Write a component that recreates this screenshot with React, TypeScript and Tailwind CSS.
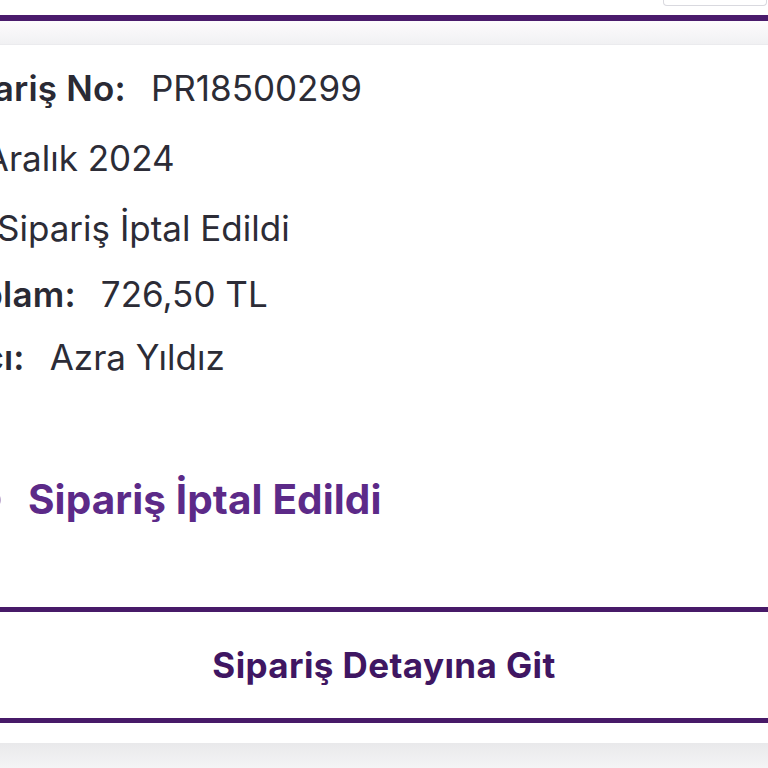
import React from 'react';

const rows = [
  { label: 'Sipariş No:', value: 'PR18500299', h: 'h-[70px]' },
  { label: '', value: '18 Aralık 2024', h: 'h-[70px]' },
  { label: '', value: 'Sipariş İptal Edildi', h: 'h-[70px]', icon: true },
  { label: 'Toplam:', value: '726,50 TL', h: 'h-[62px]' },
  { label: 'Alıcı:', value: 'Azra Yıldız', h: 'h-[64px]' },
];

const XCircle = ({ className }: { className?: string }) => (
  <svg viewBox="0 0 24 24" fill="none" stroke="currentColor" strokeWidth={2} strokeLinecap="round" className={className}>
    <circle cx="12" cy="12" r="10" />
    <path d="M15 9l-6 6M9 9l6 6" />
  </svg>
);

const App = () => {
  return (
    <div className="w-[768px] h-[768px] overflow-hidden bg-white font-['Inter','Noto_Sans',sans-serif] text-[#2c2c36]">
      {/* end of the previous card */}
      <div className="h-[15px] bg-white flex justify-end">
        <div className="w-[104px] h-[6px] mr-[1px] border-x border-b border-[#d9d9df] rounded-b-[4px]" />
      </div>
      <div className="h-[6px] bg-[#4a1b6c]" />
      <div className="h-[24px] bg-gradient-to-b from-[#fdfbfd] to-[#f1f1f3] border-b border-[#ebebee]" />

      {/* order card */}
      <div className="bg-white h-[698px] overflow-hidden">
        <div className="ml-[-61px] pt-[8px]">
          {rows.map((r, i) => (
            <div key={i} className={`${r.h} flex items-center gap-[25px] text-[35px] whitespace-nowrap`}>
              {r.label && <span className="font-semibold text-[#2a2a34] tracking-[0.2px]">{r.label}</span>}
              {r.icon && <XCircle className="w-[35px] h-[35px] text-[#6b6b78]" />}
              <span className={r.icon ? 'font-normal -ml-[2px]' : 'font-normal'}>{r.value}</span>
            </div>
          ))}
        </div>

        <div className="mt-[81px] h-[60px] flex items-center gap-[26px] ml-[-36px] whitespace-nowrap">
          <XCircle className="w-[38px] h-[38px] text-[#5c2a88]" />
          <span className="text-[40.5px] font-bold text-[#5c2a88] tracking-[0.1px]">Sipariş İptal Edildi</span>
        </div>

        <button className="mt-[77px] w-full h-[116px] border-y-[5px] border-[#471a68] bg-white flex items-center justify-center">
          <span className="text-[35px] font-bold text-[#3f1662] tracking-[0.4px]">Sipariş Detayına Git</span>
        </button>
      </div>
      <div className="h-[25px] bg-gradient-to-b from-[#e9e9eb] to-[#f4f4f5]" />
    </div>
  );
};

export default App;
